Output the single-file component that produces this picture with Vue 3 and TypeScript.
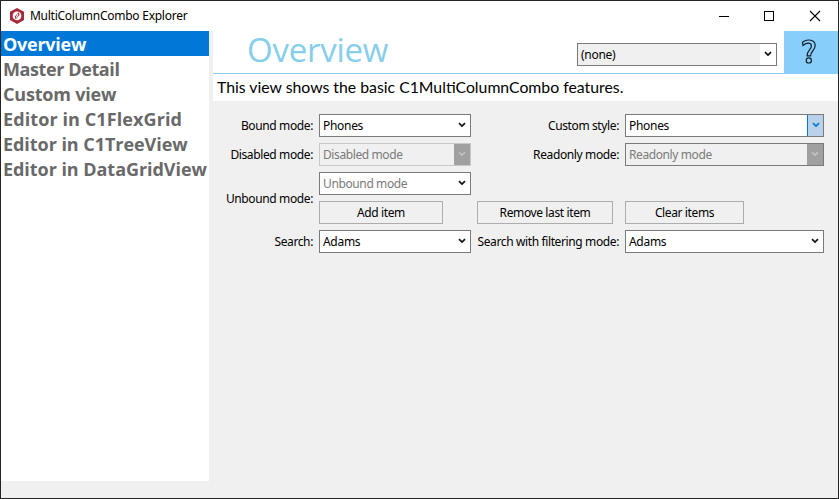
<script setup lang="ts">
import { ref } from 'vue'

interface View { title: string; spacing: string }
interface Combo { value: string; area: string; kind: string }

const views: View[] = [
  { title: 'Overview', spacing: '-.25px' },
  { title: 'Master Detail', spacing: '-.4px' },
  { title: 'Custom view', spacing: '-.2px' },
  { title: 'Editor in C1FlexGrid', spacing: '.1px' },
  { title: 'Editor in C1TreeView', spacing: '-.05px' },
  { title: 'Editor in DataGridView', spacing: '-.05px' },
]
const selected = ref(0)

const combos: Combo[] = [
  { value: 'Phones', area: 'bound', kind: '' },
  { value: 'Phones', area: 'custom', kind: 'hot' },
  { value: 'Disabled mode', area: 'disabled', kind: 'off' },
  { value: 'Readonly mode', area: 'readonly', kind: 'locked' },
  { value: 'Unbound mode', area: 'unbound', kind: 'hint' },
  { value: 'Adams', area: 'search', kind: '' },
  { value: 'Adams', area: 'filter', kind: '' },
]
</script>

<template>
  <div class="window">
    <header class="titlebar">
      <svg class="logo" width="14" height="16" viewBox="0 0 14 16">
        <path d="M7 0 14 3.8V12L7 16 0 12V3.8Z" fill="#a72a3a" />
        <circle cx="7" cy="7.8" r="4.4" fill="#fff" />
        <path d="M8.8 4.2 4.8 8.4 5.6 11.4 9.5 7Z" fill="#a72a3a" />
        <path d="M8 6.2 6.2 9.5" stroke="#fff" stroke-width="1.1" />
      </svg>
      <span class="caption">MultiColumnCombo Explorer</span>
      <div class="controls">
        <svg width="10" height="10" viewBox="0 0 10 10"><path d="M0 5.5H10" /></svg>
        <svg width="10" height="10" viewBox="0 0 10 10"><path d="M.5 .5H9.5V9.5H.5Z" /></svg>
        <svg class="smooth" width="10" height="10" viewBox="0 0 10 10"><path d="M0 0 10 10M10 0 0 10" /></svg>
      </div>
    </header>
    <div class="body">
      <nav class="sidebar">
        <div
          v-for="(v, i) in views"
          :key="v.title"
          class="view"
          :class="{ active: i === selected }"
          :style="{ letterSpacing: v.spacing }"
          @click="selected = i"
        >{{ v.title }}</div>
      </nav>
      <main class="main">
        <div class="banner">
          <h1>Overview</h1>
          <div class="combo theme">
            <span class="text">(none)</span>
            <span class="drop"><svg width="8" height="6" viewBox="0 0 8 6"><path d="M1 1.2 4 4.1 7 1.2" /></svg></span>
          </div>
          <div class="help">
            <svg width="16" height="26" viewBox="0 0 16 26">
              <path d="M1.5 3.2C3.8 1.3 6 .9 8 1 12 1.2 14.3 3.2 14.2 6.6 14.1 11.8 9.6 11.8 9.7 16.8H6.1C5.8 11.6 10.3 10.6 10.4 7 10.4 4.9 9 4.2 7.2 4.2 5.4 4.2 4 4.9 2 6.4Z" />
              <circle cx="7.8" cy="21.4" r="2.6" />
            </svg>
          </div>
        </div>
        <p class="about">This view shows the basic C1MultiColumnCombo features.</p>
        <section class="form">
          <label class="l-bound">Bound mode:</label>
          <label class="l-custom">Custom style:</label>
          <label class="l-disabled">Disabled mode:</label>
          <label class="l-readonly">Readonly mode:</label>
          <label class="l-unbound">Unbound mode:</label>
          <label class="l-search">Search:</label>
          <label class="l-filter">Search with filtering mode:</label>
          <div v-for="c in combos" :key="c.area" class="combo" :class="[c.area, c.kind]">
            <span class="text">{{ c.value }}</span>
            <span class="drop"><svg width="8" height="6" viewBox="0 0 8 6"><path d="M1 1.2 4 4.1 7 1.2" /></svg></span>
          </div>
          <button class="add">Add item</button>
          <button class="remove">Remove last item</button>
          <button class="clear">Clear items</button>
        </section>
      </main>
    </div>
  </div>
</template>

<style>
body { background: #f0f0f0; }
</style>

<style scoped>
* { box-sizing: border-box; }
.window {
  width: 839px; height: 499px; border: 1px solid #242424; background: #f0f0f0;
  display: flex; flex-direction: column; overflow: hidden;
  font: 12px/16px "Noto Sans", "Open Sans", sans-serif; color: #000;
}
.titlebar { height: 30px; flex: none; background: #fff; display: flex; align-items: center; padding-left: 9px; }
.logo { margin-top: -1px; }
.caption { margin-left: 6px; font-size: 12px; letter-spacing: -.26px; white-space: nowrap; }
.controls { margin-left: auto; display: flex; gap: 36px; padding-right: 18px; margin-top: -1px; }
.controls svg { fill: none; stroke: #000; stroke-width: 1; shape-rendering: crispEdges; }
.controls svg:first-child { margin-right: -1px; }
.controls .smooth { shape-rendering: auto; stroke-width: 1.1; overflow: visible; }
.body { flex: 1; display: flex; gap: 4px; }
.sidebar { width: 208px; height: 450px; background: #fff; }
.view {
  height: 25px; padding: 1px 0 0 2px; font: 700 18px/25px "Open Sans", sans-serif;
  color: #696969; white-space: nowrap;
}
.view.active { background: #0078d7; color: #fff; }
.main { flex: 1; min-width: 0; }
.banner { height: 43px; display: flex; background: #fff; border-bottom: 1px solid #87ceeb; }
h1 { margin: 0 auto 0 34px; font: 400 33px/37px "Open Sans", sans-serif; letter-spacing: -.25px; color: #87ceeb; }
.theme { width: 200px; margin: 12px 7px 0 0; }
.help { width: 54px; height: 43px; background: #87cefa; padding: 8px 0 0 17px; }
.help svg { fill: none; stroke: #14202c; stroke-width: 1.2; display: block; }
.about { margin: 0; height: 27px; padding-left: 4px; background: #fff; font: 15.8px/26px Lato, sans-serif; white-space: nowrap; }
.form {
  display: grid; grid-template-columns: 100px 152px 142px 199px;
  grid-template-rows: repeat(5, 23px); gap: 6px; padding-top: 13px;
  grid-template-areas:
    "lb bound lc custom"
    "ld disabled lr readonly"
    "lu unbound . ."
    "lu add remove clear"
    "ls search lf filter";
}
label { text-align: right; align-self: center; white-space: nowrap; letter-spacing: -.38px; justify-self: end; }
.l-bound { grid-area: lb; } .l-custom { grid-area: lc; }
.l-disabled { grid-area: ld; } .l-readonly { grid-area: lr; }
.l-unbound { grid-area: lu; padding-top: 2px; } .l-search { grid-area: ls; } .l-filter { grid-area: lf; }
.bound { grid-area: bound; } .custom { grid-area: custom; }
.disabled { grid-area: disabled; } .readonly { grid-area: readonly; }
.unbound { grid-area: unbound; } .search { grid-area: search; } .filter { grid-area: filter; }
.combo { height: 23px; border: 1px solid #7a7a7a; background: #fff; display: flex; }
.text { flex: 1; padding-left: 3px; line-height: 21px; letter-spacing: -.3px; white-space: nowrap; }
.drop { width: 16px; display: flex; align-items: center; justify-content: center; padding-bottom: 1px; }
.drop svg { fill: none; stroke: #111; stroke-width: 1.7; }
.theme .text { background: #f0f0f0; }
.hot .drop { background: #b9d1ea; border-left: 1px solid #0078d7; }
.hot .drop svg { stroke: #0078d7; }
.off, .locked { background: #f0f0f0; color: #7a7a7a; }
.off .text, .locked .text { letter-spacing: -.4px; }
.off { border-color: #c8c8c8; }
.off .drop, .locked .drop { background: #a0a0a0; }
.off .drop svg, .locked .drop svg { stroke: #c4c4c4; stroke-width: 1.5; }
.hint .text { color: #7a7a7a; letter-spacing: -.38px; }
button {
  height: 23px; border: 1px solid #adadad; background: #f0f0f0; padding: 0;
  font: inherit; letter-spacing: -.38px; color: #000; white-space: nowrap;
}
.add { grid-area: add; width: 124px; }
.remove { grid-area: remove; width: 136px; }
.clear { grid-area: clear; width: 119px; }
</style>
